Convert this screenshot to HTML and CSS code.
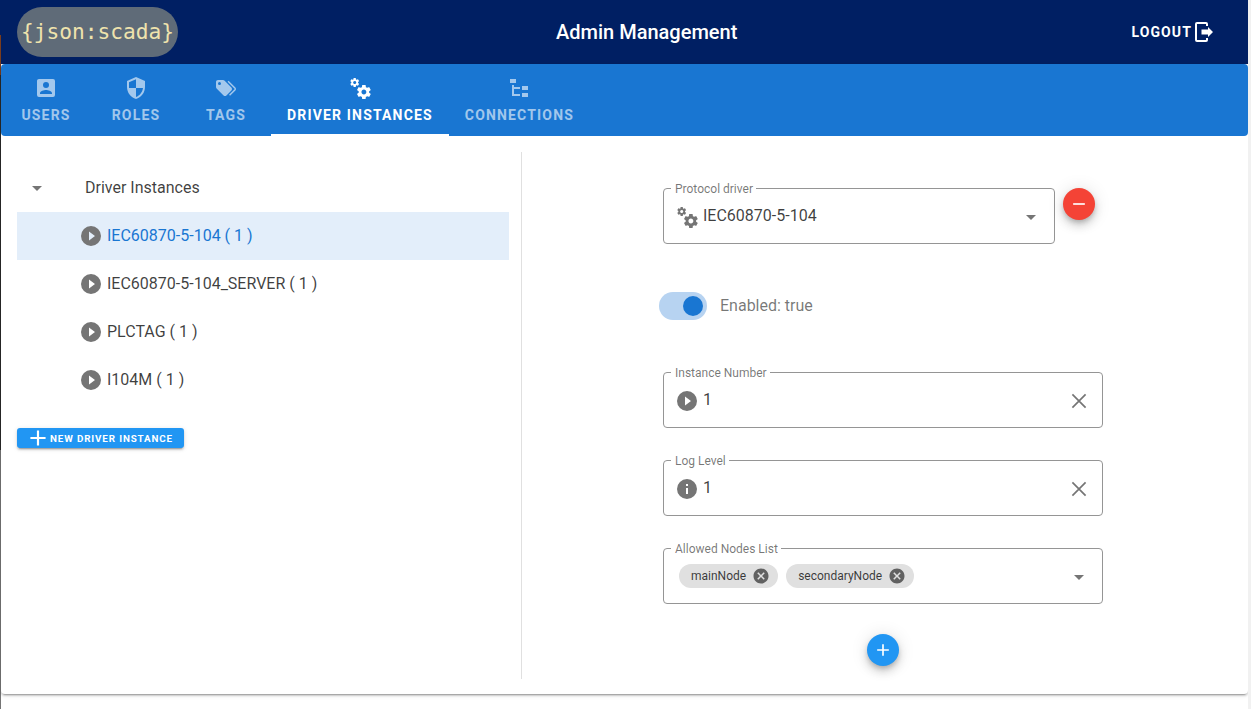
FILE: index.html
```html
<!DOCTYPE html>
<html lang="en">
<head>
<meta charset="utf-8">
<title>Admin Management</title>
<link rel="stylesheet" href="styles.css">
</head>
<body>
<svg class="sprite" aria-hidden="true">
  <symbol id="i-user" viewBox="0 0 24 24"><path d="M6,17C6,15 10,13.9 12,13.9C14,13.9 18,15 18,17V18H6M15,9A3,3 0 0,1 12,12A3,3 0 0,1 9,9A3,3 0 0,1 12,6A3,3 0 0,1 15,9M3,5V19A2,2 0 0,0 5,21H19A2,2 0 0,0 21,19V5A2,2 0 0,0 19,3H5C3.89,3 3,3.9 3,5Z"/></symbol>
  <symbol id="i-shield" viewBox="0 0 24 24"><path d="M12,12H19C18.47,16.11 15.72,19.78 12,20.92V12H5V6.3L12,3.19M12,1L3,5V11C3,16.55 6.84,21.73 12,23C17.16,21.73 21,16.55 21,11V5L12,1Z"/></symbol>
  <symbol id="i-tags" viewBox="0 0 24 24"><path d="M5.5,9A1.5,1.5 0 0,0 7,7.5A1.5,1.5 0 0,0 5.5,6A1.5,1.5 0 0,0 4,7.5A1.5,1.5 0 0,0 5.5,9M17.41,11.58C17.77,11.94 18,12.44 18,13C18,13.55 17.78,14.05 17.41,14.41L12.41,19.41C12.05,19.77 11.55,20 11,20C10.45,20 9.95,19.78 9.58,19.41L2.59,12.42C2.22,12.05 2,11.55 2,11V6C2,4.89 2.89,4 4,4H9C9.55,4 10.05,4.22 10.41,4.58L17.41,11.58M13.54,5.71L14.54,4.71L21.41,11.58C21.78,11.94 22,12.45 22,13C22,13.55 21.78,14.05 21.42,14.41L16.04,19.79L15.04,18.79L20.75,13L13.54,5.71Z"/></symbol>
  <symbol id="i-cogs" viewBox="0 0 24 24"><path d="M15.9,18.45C17.25,18.45 18.35,17.35 18.35,16C18.35,14.65 17.25,13.55 15.9,13.55C14.54,13.55 13.45,14.65 13.45,16C13.45,17.35 14.54,18.45 15.9,18.45M21.1,16.68L22.58,17.84C22.71,17.95 22.75,18.13 22.66,18.29L21.26,20.71C21.17,20.86 21,20.92 20.83,20.86L19.09,20.16C18.73,20.44 18.33,20.67 17.91,20.85L17.64,22.7C17.62,22.87 17.47,23 17.3,23H14.5C14.32,23 14.18,22.87 14.15,22.7L13.89,20.85C13.46,20.67 13.07,20.44 12.71,20.16L10.96,20.86C10.81,20.92 10.62,20.86 10.54,20.71L9.14,18.29C9.05,18.13 9.09,17.95 9.22,17.84L10.7,16.68L10.65,16L10.7,15.31L9.22,14.16C9.09,14.05 9.05,13.86 9.14,13.71L10.54,11.29C10.62,11.13 10.81,11.07 10.96,11.13L12.71,11.84C13.07,11.56 13.46,11.32 13.89,11.15L14.15,9.29C14.18,9.13 14.32,9 14.5,9H17.3C17.47,9 17.62,9.13 17.64,9.29L17.91,11.15C18.33,11.32 18.73,11.56 19.09,11.84L20.83,11.13C21,11.07 21.17,11.13 21.26,11.29L22.66,13.71C22.75,13.86 22.71,14.05 22.58,14.16L21.1,15.31L21.15,16L21.1,16.68M6.69,8.07C7.56,8.07 8.26,7.37 8.26,6.5C8.26,5.63 7.56,4.92 6.69,4.92A1.58,1.58 0 0,0 5.11,6.5C5.11,7.37 5.82,8.07 6.69,8.07M10.03,6.94L11,7.68C11.07,7.75 11.09,7.87 11.03,7.97L10.13,9.53C10.08,9.63 9.96,9.67 9.86,9.63L8.74,9.18L8,9.62L7.81,10.81C7.79,10.92 7.7,11 7.59,11H5.79C5.67,11 5.58,10.92 5.56,10.81L5.4,9.62L4.64,9.18L3.5,9.63C3.41,9.67 3.3,9.63 3.24,9.53L2.34,7.97C2.28,7.87 2.31,7.75 2.39,7.68L3.34,6.94L3.31,6.5L3.34,6.06L2.39,5.32C2.31,5.25 2.28,5.13 2.34,5.03L3.24,3.47C3.3,3.37 3.41,3.33 3.5,3.37L4.63,3.82L5.4,3.38L5.56,2.19C5.58,2.08 5.67,2 5.79,2H7.59C7.7,2 7.79,2.08 7.81,2.19L8,3.38L8.74,3.82L9.86,3.37C9.96,3.33 10.08,3.37 10.13,3.47L11.03,5.03C11.09,5.13 11.07,5.25 11,5.32L10.03,6.06L10.06,6.5L10.03,6.94Z"/></symbol>
  <symbol id="i-tree" viewBox="0 0 24 24"><path d="M3,3H9V7H3V3M15,10H21V14H15V10M15,17H21V21H15V17M13,13H7V18H13V20H7L5,20V9H7V11H13V13Z"/></symbol>
  <symbol id="i-play" viewBox="0 0 24 24"><path d="M10,16.5V7.5L16,12M12,2A10,10 0 0,0 2,12A10,10 0 0,0 12,22A10,10 0 0,0 22,12A10,10 0 0,0 12,2Z"/></symbol>
  <symbol id="i-info" viewBox="0 0 24 24"><path d="M13,9H11V7H13M13,17H11V11H13M12,2A10,10 0 0,0 2,12A10,10 0 0,0 12,22A10,10 0 0,0 22,12A10,10 0 0,0 12,2Z"/></symbol>
  <symbol id="i-close" viewBox="0 0 24 24"><path d="M5.4 5.4L18.6 18.6M18.6 5.4L5.4 18.6" fill="none" stroke="currentColor" stroke-width="1.7"/></symbol>
  <symbol id="i-close-circle" viewBox="0 0 24 24"><path d="M12,2C17.53,2 22,6.47 22,12C22,17.53 17.53,22 12,22C6.47,22 2,17.53 2,12C2,6.47 6.47,2 12,2M15.59,7L12,10.59L8.41,7L7,8.41L10.59,12L7,15.59L8.41,17L12,13.41L15.59,17L17,15.59L13.41,12L17,8.41L15.59,7Z"/></symbol>
  <symbol id="i-caret" viewBox="0 0 24 24"><path d="M7,10L12,15L17,10H7Z"/></symbol>
  <symbol id="i-plus" viewBox="0 0 24 24"><path d="M19,13H13V19H11V13H5V11H11V5H13V11H19V13Z"/></symbol>
  <symbol id="i-minus" viewBox="0 0 24 24"><path d="M19,13H5V11H19V13Z"/></symbol>
  <symbol id="i-logout" viewBox="0 0 24 24"><path d="M5 2H14a2 2 0 0 1 2 2V6H14V4H5V20H14V18H16V20a2 2 0 0 1-2 2H5a2 2 0 0 1-2-2V4a2 2 0 0 1 2-2Z M16 7L21 12L16 17V14.5H9.5V9.5H16Z"/></symbol>
</svg>

<div class="edge" aria-hidden="true">
  <span class="edge-navy"></span>
  <span class="edge-brown"></span>
  <span class="edge-dark"></span>
  <span class="edge-grey"></span>
</div>

<div class="page">
  <header class="topbar">
    <div class="logo">{json:scada}</div>
    <h1 class="title">Admin Management</h1>
    <a class="logout">LOGOUT<svg class="icon"><use href="#i-logout"/></svg></a>
  </header>

  <main class="card">
    <nav class="tabs">
      <a class="tab"><svg class="icon"><use href="#i-user"/></svg>USERS</a>
      <a class="tab"><svg class="icon"><use href="#i-shield"/></svg>ROLES</a>
      <a class="tab"><svg class="icon"><use href="#i-tags"/></svg>TAGS</a>
      <a class="tab tab-active"><svg class="icon"><use href="#i-cogs"/></svg>DRIVER INSTANCES</a>
      <a class="tab"><svg class="icon"><use href="#i-tree"/></svg>CONNECTIONS</a>
    </nav>

    <div class="content">
      <section class="tree-col">
        <div class="tree-root">
          <svg class="icon tree-caret"><use href="#i-caret"/></svg>
          <span class="tree-label">Driver Instances</span>
        </div>
        <div class="tree-row tree-row-selected"><svg class="icon"><use href="#i-play"/></svg><span class="tree-label">IEC60870-5-104 ( 1 )</span></div>
        <div class="tree-row"><svg class="icon"><use href="#i-play"/></svg><span class="tree-label">IEC60870-5-104_SERVER ( 1 )</span></div>
        <div class="tree-row"><svg class="icon"><use href="#i-play"/></svg><span class="tree-label">PLCTAG ( 1 )</span></div>
        <div class="tree-row"><svg class="icon"><use href="#i-play"/></svg><span class="tree-label">I104M ( 1 )</span></div>
        <button class="new-btn"><svg class="icon"><use href="#i-plus"/></svg>NEW DRIVER INSTANCE</button>
      </section>

      <div class="divider"></div>

      <section class="form-col">
        <div class="protocol-row">
          <fieldset class="field field-protocol">
            <legend>Protocol driver</legend>
            <div class="field-body">
              <svg class="icon"><use href="#i-cogs"/></svg>
              <span class="value">IEC60870-5-104</span>
              <svg class="icon field-end"><use href="#i-caret"/></svg>
            </div>
          </fieldset>
          <button class="fab fab-red"><svg class="icon"><use href="#i-minus"/></svg></button>
        </div>

        <div class="switch-row">
          <span class="switch"><span class="switch-thumb"></span></span>
          <span class="switch-label">Enabled: true</span>
        </div>

        <fieldset class="field field-first">
          <legend>Instance Number</legend>
          <div class="field-body">
            <svg class="icon"><use href="#i-play"/></svg>
            <span class="value">1</span>
            <svg class="icon field-end"><use href="#i-close"/></svg>
          </div>
        </fieldset>

        <fieldset class="field">
          <legend>Log Level</legend>
          <div class="field-body">
            <svg class="icon"><use href="#i-info"/></svg>
            <span class="value">1</span>
            <svg class="icon field-end"><use href="#i-close"/></svg>
          </div>
        </fieldset>

        <fieldset class="field">
          <legend>Allowed Nodes List</legend>
          <div class="field-body field-body-chips">
            <span class="chip">mainNode<svg class="icon"><use href="#i-close-circle"/></svg></span>
            <span class="chip">secondaryNode<svg class="icon"><use href="#i-close-circle"/></svg></span>
            <svg class="icon field-end"><use href="#i-caret"/></svg>
          </div>
        </fieldset>

        <button class="fab fab-blue"><svg class="icon"><use href="#i-plus"/></svg></button>
      </section>
    </div>
  </main>
</div>

<div class="gutter" aria-hidden="true"></div>
</body>
</html>
```

FILE: styles.css
```css
* { box-sizing: border-box; }

html, body { height: 100%; }

body {
  margin: 0;
  display: flex;
  height: 709px;
  overflow: hidden;
  background: #fff;
  color: rgba(0, 0, 0, .76);
  font-family: Roboto, "Liberation Sans", sans-serif;
  font-size: 16px;
}

.sprite { display: none; }

.icon {
  width: 24px;
  height: 24px;
  flex: none;
  fill: currentColor;
}

/* window edges */
.edge { width: 1px; flex: none; display: flex; flex-direction: column; }
.edge-navy { height: 35px; background: #001f63; }
.edge-brown { height: 40px; background: #7a3c1c; }
.edge-dark { height: 375px; background: #2a2a2a; }
.edge-grey { flex: 1; background: #757575; }
.gutter { width: 3px; flex: none; background: #f1f1f1; }

.page { flex: 1; min-width: 0; display: flex; flex-direction: column; }

/* top bar */
.topbar {
  height: 64px;
  flex: none;
  display: flex;
  align-items: center;
  padding: 0 16px;
  background: #001f63;
  color: #fff;
}

.logo {
  width: 161px;
  height: 50px;
  border-radius: 25px;
  background: #5f6b78;
  color: #efe3ad;
  font-family: "DejaVu Sans Mono", monospace;
  font-size: 21.2px;
  line-height: 50px;
  text-align: center;
  white-space: nowrap;
}

.title {
  flex: 1;
  margin: 0;
  font-size: 20px;
  font-weight: 500;
  text-align: center;
}

.logout {
  display: flex;
  align-items: center;
  padding: 0 16px;
  font-size: 14px;
  font-weight: 700;
  letter-spacing: .08em;
}

/* tabs */
.card {
  flex: none;
  height: 630px;
  display: flex;
  flex-direction: column;
  border-radius: 4px;
  background: #fff;
  box-shadow: 0 3px 1px -2px rgba(0, 0, 0, .2), 0 2px 2px 0 rgba(0, 0, 0, .14), 0 1px 5px 0 rgba(0, 0, 0, .12);
}

.tabs {
  height: 72px;
  flex: none;
  display: flex;
  border-radius: 4px;
  background: #1976d2;
}

.tab {
  min-width: 90px;
  padding: 12px 16px 0;
  display: flex;
  flex-direction: column;
  align-items: center;
  gap: 5px;
  color: rgba(255, 255, 255, .6);
  font-size: 14px;
  line-height: 20px;
  font-weight: 700;
  letter-spacing: .0835em;
  white-space: nowrap;
}

.tab-active {
  color: #fff;
  border-bottom: 2px solid #fff;
}

/* tree */
.content { flex: 1; display: flex; min-height: 0; }

.tree-col { width: 520px; flex: none; padding: 28px 12px 0 16px; }

.tree-root {
  height: 48px;
  display: flex;
  align-items: center;
  padding-left: 8px;
  gap: 36px;
}

.tree-label { margin-bottom: 2px; }

.tree-caret { color: rgba(0, 0, 0, .54); }

.tree-row {
  height: 48px;
  display: flex;
  align-items: center;
  gap: 4px;
  padding-left: 62px;
}

.tree-row .icon { color: #757575; }

.tree-row-selected {
  background: #e3eefa;
  color: #1976d2;
}

.new-btn {
  display: flex;
  align-items: center;
  width: 167px;
  height: 20px;
  margin-top: 24px;
  padding: 0 0 0 8px;
  border: 0;
  border-radius: 3px;
  background: #2196f3;
  color: #fff;
  font-family: inherit;
  font-size: 9.8px;
  font-weight: 700;
  letter-spacing: .0892857em;
  white-space: nowrap;
  box-shadow: 0 3px 1px -2px rgba(0, 0, 0, .2), 0 2px 2px 0 rgba(0, 0, 0, .14), 0 1px 5px 0 rgba(0, 0, 0, .12);
}

.new-btn .icon { width: 26px; height: 26px; margin-right: -1px; }

.divider {
  width: 1px;
  flex: none;
  margin: 16px 0 15px;
  background: #e0e0e0;
}

/* form */
.form-col {
  width: 440px;
  margin-left: 141px;
  padding-top: 52px;
  display: flex;
  flex-direction: column;
}

.protocol-row { display: flex; align-items: flex-start; gap: 8px; width: 440px; }

.field {
  width: 440px;
  height: 56px;
  margin: 32px 0 0;
  padding: 0 11px;
  flex: none;
  border: 1px solid #959595;
  border-radius: 4px;
  min-width: 0;
}

.field legend {
  height: 0;
  margin-left: -4px;
  padding: 0 3px 0 4px;
  color: rgba(0, 0, 0, .54);
  font-size: 12px;
  line-height: 0;
}

.field-protocol { width: 392px; margin-top: 0; }
.field-first { margin-top: 52px; }

.field-body {
  height: 54px;
  padding-top: 2px;
  display: flex;
  align-items: center;
  gap: 4px;
  color: #757575;
}

.field-body-chips { gap: 0; }

.value {
  margin-top: -3px;
  color: rgba(0, 0, 0, .76);
}

.field-end { margin-left: auto; }

.chip {
  height: 24px;
  display: flex;
  align-items: center;
  margin: -2px 4px 0;
  padding: 0 8px 0 12px;
  gap: 6px;
  border-radius: 12px;
  background: #e0e0e0;
  color: rgba(0, 0, 0, .76);
  font-size: 12px;
}

.chip .icon { width: 18px; height: 18px; color: #616161; }

.fab {
  width: 32px;
  height: 32px;
  flex: none;
  display: flex;
  align-items: center;
  justify-content: center;
  padding: 0;
  border: 0;
  border-radius: 50%;
  color: #fff;
  box-shadow: 0 3px 5px -1px rgba(0, 0, 0, .2), 0 6px 10px 0 rgba(0, 0, 0, .14), 0 1px 18px 0 rgba(0, 0, 0, .12);
}

.fab .icon { width: 20px; height: 20px; }
.fab-red { background: #f44336; }
.fab-blue { margin-top: 30px; align-self: center; background: #2196f3; }

.switch-row {
  display: flex;
  align-items: center;
  gap: 13px;
  margin: 48px 0 0 -4px;
  color: rgba(0, 0, 0, .54);
}

.switch-label { margin-bottom: 2px; }

.switch {
  width: 48px;
  height: 28px;
  display: flex;
  align-items: center;
  justify-content: flex-end;
  padding-right: 4px;
  border-radius: 14px;
  background: #b7d3f1;
}

.switch-thumb {
  width: 20px;
  height: 20px;
  border-radius: 50%;
  background: #1976d2;
}
```
